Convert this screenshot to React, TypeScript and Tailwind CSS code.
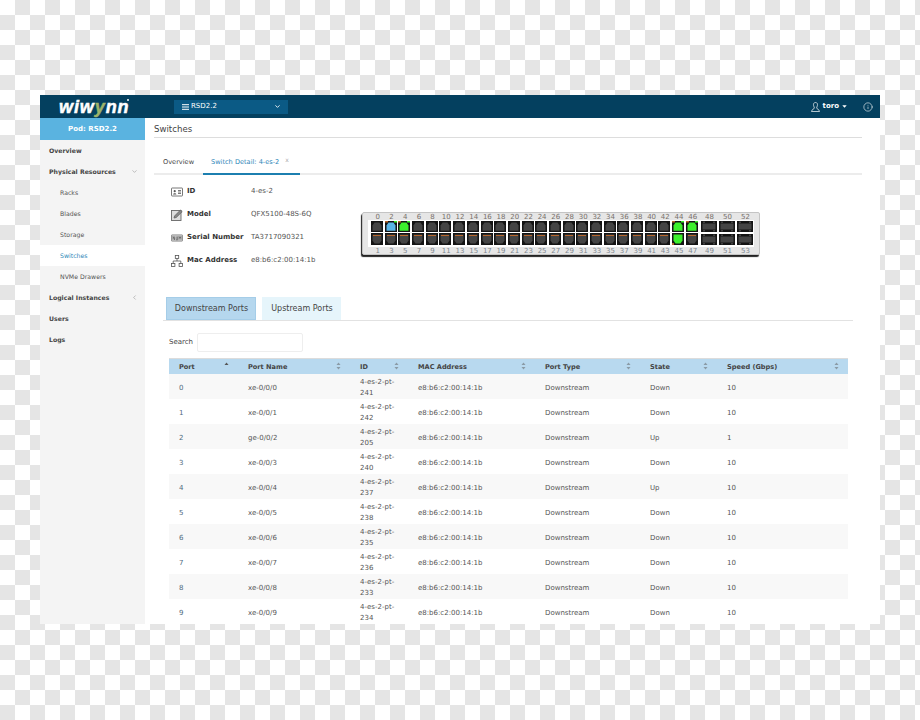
import React from 'react';
import { ChevronDown, ChevronLeft, Info } from 'lucide-react';

const rows = [
  ['0', 'xe-0/0/0', '241', 'Down', '10'],
  ['1', 'xe-0/0/1', '242', 'Down', '10'],
  ['2', 'ge-0/0/2', '205', 'Up', '1'],
  ['3', 'xe-0/0/3', '240', 'Down', '10'],
  ['4', 'xe-0/0/4', '237', 'Up', '10'],
  ['5', 'xe-0/0/5', '238', 'Down', '10'],
  ['6', 'xe-0/0/6', '235', 'Down', '10'],
  ['7', 'xe-0/0/7', '236', 'Down', '10'],
  ['8', 'xe-0/0/8', '233', 'Down', '10'],
  ['9', 'xe-0/0/9', '234', 'Down', '10'],
];

const headers: [string, string, boolean][] = [
  ['Port', 'w-[69px]', true],
  ['Port Name', 'w-[112px]', false],
  ['ID', 'w-[58px]', false],
  ['MAC Address', 'w-[127px]', false],
  ['Port Type', 'w-[105px]', false],
  ['State', 'w-[77px]', false],
  ['Speed (Gbps)', 'w-[131px]', false],
];

function Sort({ up }: { up?: boolean }) {
  return (
    <svg width="5" height="8" viewBox="0 0 5 8" className="absolute right-[9px] top-[3px]">
      <path d="M2.5 0.5 L4.5 3 L0.5 3 Z" fill={up ? '#555' : '#8a9aa5'} />
      {!up && <path d="M2.5 7.5 L4.5 5 L0.5 5 Z" fill="#8a9aa5" />}
    </svg>
  );
}

function Port({ state, flip }: { state?: 'blue' | 'green'; flip?: boolean }) {
  const fill = state === 'blue' ? '#5ab4e6' : state === 'green' ? '#3cf02c' : '#444444';
  return flip ? (
    <svg width="12" height="12" viewBox="0 0 12 12" className="block shrink-0">
      <rect width="12" height="12" fill="#141414" />
      <path d="M1.5 1.5 H10.5 V7.5 L8.5 10.5 H3.5 L1.5 7.5 Z" fill={fill} />
      {!state && <rect x="2" y="2" width="8" height="1" fill="#b8662c" />}
      {state && <rect x="0" y="10" width="2" height="2" fill="#b8662c" />}
    </svg>
  ) : (
    <svg width="12" height="11" viewBox="0 0 12 11" className="block shrink-0">
      <rect width="12" height="11" fill="#141414" />
      <path d="M1.5 9.8 H10.5 V4.5 L8.5 1.5 H3.5 L1.5 4.5 Z" fill={fill} />
      {state && <rect x="0" y="0" width="3" height="1.5" fill="#b8662c" />}
      {state && <rect x="9" y="0" width="3" height="1.5" fill="#3cf02c" />}
    </svg>
  );
}

function WidePort() {
  return (
    <svg width="16" height="11" viewBox="0 0 16 11" className="block shrink-0">
      <rect width="16" height="11" fill="#141414" />
      <rect x="1.5" y="2.5" width="13" height="6" fill="#444" />
      <path d="M2 1.2 H4 M12 1.2 H14 M2 9.8 H4 M12 9.8 H14" stroke="#555" strokeWidth="1" />
    </svg>
  );
}

const topNums = Array.from({ length: 24 }, (_, i) => i * 2);
const topState: Record<number, 'blue' | 'green'> = { 1: 'blue', 2: 'green', 22: 'green', 23: 'green' };
const botState: Record<number, 'blue' | 'green'> = { 22: 'green' };

function SwitchPanel() {
  return (
    <div className="w-[398px] h-[43px] bg-[#e6e6e6] border border-[#c4c4c4] rounded-[2px] shadow-[-1px_2px_1px_#222] pl-[5px] flex flex-col items-start mt-[37px] ml-[29px]">
      <div className="flex h-[7px] items-center text-[7px] leading-[7px] text-[#77706a] pl-[3px] pt-[1px]">
        {topNums.map((n) => (
          <span key={n} className="w-[13.7px] text-center shrink-0">{n}</span>
        ))}
        {[48, 50, 52].map((n, i) => (
          <span key={n} className={i === 0 ? 'w-[18px] ml-[1px] text-center shrink-0' : 'w-[18px] text-center shrink-0'}>{n}</span>
        ))}
      </div>
      <div className="bg-white w-[386px] h-[27px] flex flex-col gap-[1px] pt-[1px] pl-[3px]">
        {[false, true].map((flip) => (
          <div key={String(flip)} className="flex items-center">
            {topNums.map((n, i) => (
              <div key={n} className="w-[13.7px] flex justify-start shrink-0">
                <Port flip={flip} state={(flip ? botState : topState)[i]} />
              </div>
            ))}
            {[0, 1, 2].map((k) => (
              <div key={k} className={k === 0 ? 'w-[18px] ml-[1px] flex shrink-0' : 'w-[18px] flex shrink-0'}>
                <WidePort />
              </div>
            ))}
          </div>
        ))}
      </div>
      <div className="flex h-[7px] items-center text-[7px] leading-[7px] text-[#808890] pl-[3px] pt-[1px]">
        {topNums.map((n) => (
          <span key={n} className="w-[13.7px] text-center shrink-0">{n + 1}</span>
        ))}
        {[49, 51, 53].map((n, i) => (
          <span key={n} className={i === 0 ? 'w-[18px] ml-[1px] text-center shrink-0' : 'w-[18px] text-center shrink-0'}>{n}</span>
        ))}
      </div>
    </div>
  );
}

const iconClass = 'w-[12px] h-[12px] shrink-0';
const infoRows: [string, string, React.ReactNode][] = [
  ['ID', '4-es-2', (
    <svg viewBox="0 0 12 10" className={iconClass} fill="none" stroke="#555" strokeWidth="0.8">
      <rect x="0.5" y="1" width="11" height="8" rx="0.6" />
      <circle cx="3.7" cy="4.2" r="1.1" fill="#555" stroke="none" />
      <path d="M2 7.6 C2.3 5.8 5.1 5.8 5.4 7.6 Z" fill="#555" stroke="none" />
      <path d="M7 3.5 H10 M7 5 H10 M7 6.5 H10" />
    </svg>
  )],
  ['Model', 'QFX5100-48S-6Q', (
    <svg viewBox="0 0 12 12" className={iconClass} fill="none" stroke="#666" strokeWidth="0.9">
      <rect x="0.5" y="1.5" width="9.5" height="10" fill="#ddd" />
      <path d="M3 9 L3.6 7 L9.5 1 L11.2 2.6 L5.2 8.5 Z" fill="#888" stroke="#666" />
    </svg>
  )],
  ['Serial Number', 'TA3717090321', (
    <svg viewBox="0 0 12 8" className={iconClass}>
      <rect x="0.4" y="0.9" width="11.2" height="6.2" rx="0.6" fill="#d8d8d8" stroke="#666" strokeWidth="0.7" />
      <path d="M2 5.8 V2.4 L3.6 5.8 V2.4 M5.2 2.4 V5.8 H6.6 V2.4 M8 5.8 V2.4 L9 4.4 L10 2.4 V5.8" fill="none" stroke="#555" strokeWidth="0.7" />
    </svg>
  )],
  ['Mac Address', 'e8:b6:c2:00:14:1b', (
    <svg viewBox="0 0 12 12" className={iconClass} fill="none" stroke="#555" strokeWidth="0.8">
      <rect x="4.3" y="0.5" width="3.4" height="3" />
      <rect x="0.5" y="8.5" width="3.4" height="3" />
      <rect x="8.1" y="8.5" width="3.4" height="3" />
      <path d="M6 3.5 V6 M2.2 8.5 V6 H9.8 V8.5" />
    </svg>
  )],
];

const sideItems: [string, boolean, 'down' | 'left' | null, boolean][] = [
  ['Overview', true, null, false],
  ['Physical Resources', true, 'down', false],
  ['Racks', false, null, false],
  ['Blades', false, null, false],
  ['Storage', false, null, false],
  ['Switches', false, null, true],
  ['NVMe Drawers', false, null, false],
  ['Logical Instances', true, 'left', false],
  ['Users', true, null, false],
  ['Logs', true, null, false],
];

export default function App() {
  return (
    <div className="w-[920px] h-[720px] overflow-hidden pl-[40px] pt-[95px] bg-[repeating-conic-gradient(#e5e5e5_0_25%,#ffffff_0_50%)] bg-[length:30px_30px] font-['DejaVu_Sans',sans-serif]">
      <div className="w-[840px] h-[529px] bg-white flex flex-col overflow-hidden">
        <header className="h-[23px] shrink-0 bg-[#04405f] flex items-center text-white">
          <div className="w-[134px] pl-[19px] relative h-full flex items-center shrink-0">
            <span className="font-['Liberation_Sans',sans-serif] font-bold italic text-[18px] tracking-[0.9px] leading-none [-webkit-text-stroke:0.5px_white]">
              wi<span>w</span><span className="text-[#9db36a] [-webkit-text-stroke:0.5px_#9db36a]">y</span>nn
            </span>
            <span className="absolute left-[87px] top-[4px] w-[2px] h-[2px] rounded-full bg-white" />
          </div>
          <div className="w-[114px] h-[14px] bg-[#0b5a85] flex items-center pl-[8px] pr-[7px] text-[7px]">
            <svg width="7" height="6" viewBox="0 0 7 6" className="mr-[2px]">
              <path d="M0 0.7 H7 M0 3 H7 M0 5.3 H7" stroke="#fff" strokeWidth="1" />
            </svg>
            <span>RSD2.2</span>
            <ChevronDown className="ml-auto" size={7} strokeWidth={3} />
          </div>
          <div className="ml-auto flex items-center">
            <svg width="9" height="10" viewBox="0 0 9 10" fill="none" stroke="#fff" strokeWidth="0.7" className="mr-[3px]">
              <path d="M4.5 0.5 C6.2 0.5 6.8 2 6.4 3.6 C6.2 4.6 5.6 5.4 5.6 6 C5.6 7 8.5 7.4 8.5 9.5 H0.5 C0.5 7.4 3.4 7 3.4 6 C3.4 5.4 2.8 4.6 2.6 3.6 C2.2 2 2.8 0.5 4.5 0.5 Z" />
            </svg>
            <span className="text-[7px] font-bold">toro</span>
            <svg width="5" height="3" viewBox="0 0 5 3" className="ml-[3px]">
              <path d="M0.3 0.3 H4.7 L2.5 2.7 Z" fill="#fff" />
            </svg>
            <Info className="ml-[16px] mr-[7px]" size={10} strokeWidth={1.4} />
          </div>
        </header>
        <div className="flex flex-1 min-h-0">
          <aside className="w-[105px] shrink-0 bg-[#f4f4f4]">
            <div className="h-[22px] bg-[#5ab3e0] flex items-center justify-center text-white font-bold text-[7px]">Pod: RSD2.2</div>
            {sideItems.map(([label, bold, chev, active]) => (
              <div
                key={label}
                className={
                  active
                    ? 'h-[21px] flex items-center pl-[20px] pr-[7px] text-[6.2px] text-[#2e86b8] bg-white'
                    : bold
                    ? 'h-[21px] flex items-center pl-[9px] pr-[7px] text-[6.2px] font-bold text-[#444]'
                    : 'h-[21px] flex items-center pl-[20px] pr-[7px] text-[6.2px] text-[#555]'
                }
              >
                <span>{label}</span>
                {chev === 'down' && <ChevronDown className="ml-auto text-[#777]" size={7} strokeWidth={1.5} />}
                {chev === 'left' && <ChevronLeft className="ml-auto text-[#777]" size={7} strokeWidth={1.5} />}
              </div>
            ))}
          </aside>
          <main className="flex-1 min-w-0 pl-[9px] pr-[18px] pt-[5px] text-[#555]">
            <div className="h-[14px] border-b border-[#ddd] text-[8.6px] leading-[12px] text-[#444] box-content pb-[0px]">Switches</div>
            <div className="mt-[18px] h-[19px] border-b-2 border-[#ececec] flex items-start text-[6.6px] leading-[12px]">
              <span className="pl-[9px] w-[49px] text-[#444]">Overview</span>
              <div className="w-[97px] h-[19px] border-b-2 border-[#1c7fb0] pl-[8px] text-[#2e86b8] flex shrink-0">
                <span>Switch Detail: 4-es-2</span>
                <span className="ml-[6px] text-[6px] leading-[8px] text-[#aaa]">x</span>
              </div>
            </div>
            <div className="flex h-[119px]">
              <div className="pl-[17px] pt-[5px] w-[179px] shrink-0">
                {infoRows.map(([k, v, icon]) => (
                  <div key={k} className="h-[23px] flex items-center">
                    {icon}
                    <span className="ml-[4px] w-[64px] text-[7px] font-bold text-[#333] shrink-0 whitespace-nowrap">{k}</span>
                    <span className="text-[7px] text-[#555] whitespace-nowrap">{v}</span>
                  </div>
                ))}
              </div>
              <SwitchPanel />
            </div>
            <div className="ml-[9px] w-[690px] h-[27px] pl-[3px] flex gap-[6px] items-start border-b border-[#e2e2e2] text-[8px]">
              <div className="w-[90px] h-[23px] bg-[#b5d7ee] border border-[#a5cde8] flex items-center justify-center text-[#444] mt-[3px] pl-[1px]">Downstream Ports</div>
              <div className="w-[79px] h-[23px] bg-[#e6f5fb] flex items-center justify-center text-[#444] mt-[3px] pl-[1px]">Upstream Ports</div>
            </div>
            <div className="ml-[15px] mt-[12px] flex items-center h-[19px] text-[7px]">
              <span className="w-[28px] text-[#444]">Search</span>
              <div className="w-[106px] h-[19px] border border-[#eee] rounded-[2px]" />
            </div>
            <table className="ml-[15px] mt-[6px] w-[679px] table-fixed border-collapse border-t border-[#dcdcdc] text-[7px] leading-[11px]">
              <thead>
                <tr className="h-[15px] bg-[#b8d9ef] text-[#444]">
                  {headers.map(([h, w, up]) => (
                    <th key={h} className={`${w} relative pl-[10px] pt-[2px] text-left font-bold text-[6.6px]`}>
                      {h}
                      <Sort up={up} />
                    </th>
                  ))}
                </tr>
              </thead>
              <tbody>
                {rows.map(([port, name, id, state, speed], i) => (
                  <tr key={port} className={i % 2 === 0 ? 'h-[25px] bg-[#f8f8f8]' : 'h-[25px] bg-white'}>
                    <td className="pl-[10px] pt-[4px] text-[#4f6a7d]">{port}</td>
                    <td className="pl-[10px] pt-[4px]">{name}</td>
                    <td className="pl-[10px] pr-[4px] pt-[3px]">4-es-2-pt-<br />{id}</td>
                    <td className="pl-[10px] pt-[4px]">e8:b6:c2:00:14:1b</td>
                    <td className="pl-[10px] pt-[4px]">Downstream</td>
                    <td className="pl-[10px] pt-[4px]">{state}</td>
                    <td className="pl-[10px] pt-[4px]">{speed}</td>
                  </tr>
                ))}
              </tbody>
            </table>
          </main>
        </div>
      </div>
    </div>
  );
}
